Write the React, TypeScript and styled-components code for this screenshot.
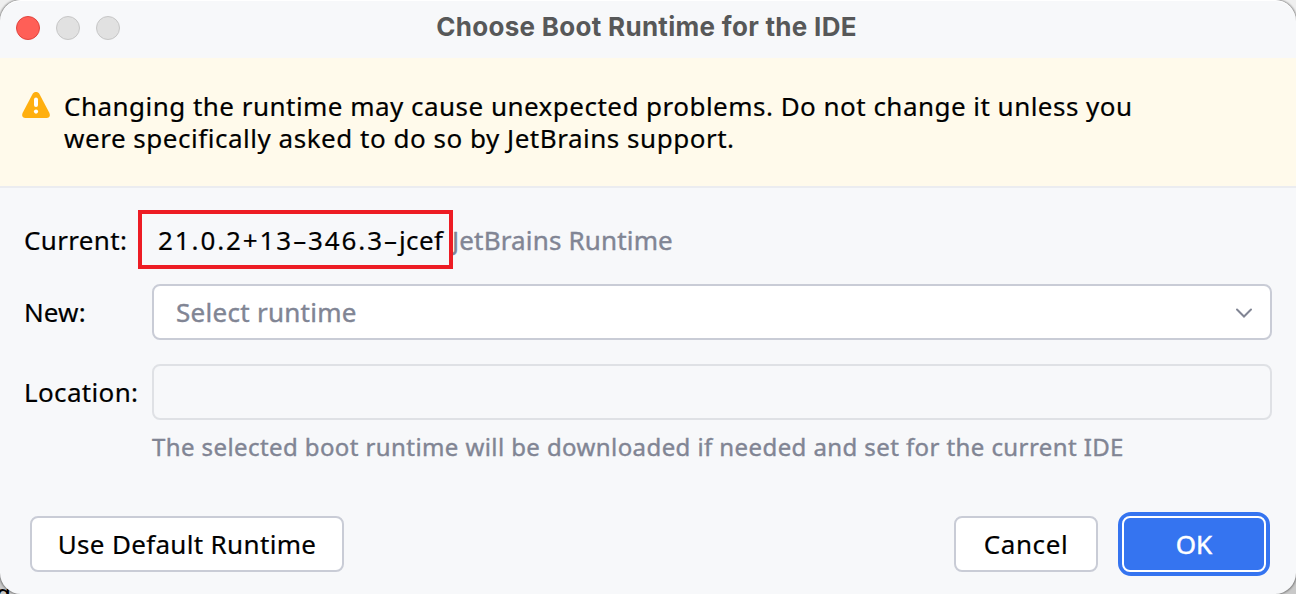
import React from "react";
import styled, { createGlobalStyle } from "styled-components";

const GlobalStyle = createGlobalStyle`
  *, *::before, *::after { box-sizing: border-box; }
  body { margin: 0; overflow: hidden; font-family: "Noto Sans", "Open Sans", sans-serif; }
  button { font: inherit; }
`;

const Desktop = styled.div`
  position: relative;
  width: 1296px;
  height: 594px;
  overflow: hidden;
  background: linear-gradient(#efefef 0%, #efefef 50%, #c9c9c9 50%, #c9c9c9 100%);
`;

const BackdropText = styled.span`
  position: absolute;
  left: -4px;
  top: 579px;
  font-size: 24px;
  font-weight: 500;
  line-height: 28px;
  color: #000;
`;

const Dialog = styled.div`
  position: relative;
  display: flex;
  flex-direction: column;
  height: 594px;
  border-radius: 21px;
  overflow: hidden;
  background: #f7f8fa;
  box-shadow: 0 0 2px 1px rgba(0, 0, 0, 0.4);
  color: #000;
  font-size: 26px;
  line-height: 32px;
`;

const TitleBar = styled.header`
  display: grid;
  grid-template-columns: 1fr auto 1fr;
  align-items: center;
  height: 58px;
  flex: none;
  padding: 0 16px;
  border-radius: 21px 21px 0 0;
  box-shadow: inset 0 1px 0 #fff;
`;

const Lights = styled.div`
  display: flex;
  gap: 16px;
  margin-top: -2px;
`;

const Light = styled.span<{ $active?: boolean }>`
  width: 24px;
  height: 24px;
  border-radius: 50%;
  background: ${(p) => (p.$active ? "#ff5f57" : "#e1e1e1")};
  border: 1px solid ${(p) => (p.$active ? "#e0443e" : "#c6c6c6")};
`;

const Title = styled.h1`
  margin: -4px 0 0;
  padding-right: 3px;
  font-family: Inter, sans-serif;
  font-size: 26px;
  font-weight: 700;
  line-height: 32px;
  letter-spacing: 0.3px;
  white-space: nowrap;
  color: #575859;
`;

const Label = styled.span<{ $spacing?: number }>`
  white-space: nowrap;
  letter-spacing: ${(p) => p.$spacing ?? 0}px;
  -webkit-text-stroke: 0.2px currentColor;
`;

const Muted = styled(Label)`
  color: #818594;
  -webkit-text-stroke: 0.4px currentColor;
`;

const Warning = styled.section`
  display: flex;
  gap: 14px;
  flex: none;
  height: 130px;
  padding: 32px 22px 0;
  background: #fffaeb;
  border-bottom: 2px solid #ebecf0;
`;

const WarningIcon = styled.svg`
  flex: none;
  width: 28px;
  height: 28px;
  margin-top: 1px;
`;

const WarningText = styled.p`
  display: flex;
  flex-direction: column;
  margin: 0;
`;

const Form = styled.main`
  display: flex;
  flex-direction: column;
  flex: none;
  padding: 22px 24px 0;
`;

const Row = styled.div<{ $gap?: number }>`
  display: flex;
  align-items: center;
  margin-bottom: ${(p) => p.$gap ?? 0}px;
`;

const RowLabel = styled.div`
  width: 128px;
  flex: none;
`;

const Highlight = styled.div`
  display: flex;
  align-items: center;
  position: relative;
  z-index: 1;
  width: 315px;
  height: 59px;
  margin-left: -14px;
  padding-left: 16px;
  border: 4px solid #ed1c24;
`;

const Vendor = styled(Muted)`
  margin-left: -1px;
`;

const Field = styled.div<{ $disabled?: boolean }>`
  display: flex;
  align-items: center;
  justify-content: space-between;
  flex: 1;
  height: 56px;
  padding: 0 16px 0 22px;
  border: 2px solid ${(p) => (p.$disabled ? "#dfe1e5" : "#c9ccd6")};
  border-radius: 8px;
  background: ${(p) => (p.$disabled ? "#f7f8fa" : "#fff")};
`;

const Hint = styled.div`
  padding: 11px 0 0 128px;
  font-size: 24px;
`;

const Footer = styled.footer`
  display: flex;
  align-items: center;
  justify-content: space-between;
  margin-top: auto;
  padding: 0 26px 18px 30px;
`;

const Actions = styled.div`
  display: flex;
  align-items: center;
  gap: 20px;
`;

const Button = styled.button<{ $width: number; $primary?: boolean }>`
  display: flex;
  align-items: center;
  justify-content: center;
  width: ${(p) => p.$width}px;
  height: ${(p) => (p.$primary ? 64 : 56)}px;
  padding: 0;
  color: ${(p) => (p.$primary ? "#fff" : "#000")};
  background: ${(p) => (p.$primary ? "#3574f0" : "#fff")};
  border: ${(p) => (p.$primary ? "4px solid #3574f0" : "2px solid #c9ccd6")};
  border-radius: ${(p) => (p.$primary ? 13 : 8)}px;
`;

const FocusInner = styled.span`
  display: flex;
  align-items: center;
  justify-content: center;
  width: 100%;
  height: 100%;
  border: 2px solid #fff;
  border-radius: 8px;
  -webkit-text-stroke: 0.5px currentColor;
`;

export default function App() {
  return (
    <>
      <GlobalStyle />
      <Desktop>
        <BackdropText>g</BackdropText>
        <Dialog>
          <TitleBar>
            <Lights>
              <Light $active />
              <Light />
              <Light />
            </Lights>
            <Title>Choose Boot Runtime for the IDE</Title>
            <span />
          </TitleBar>
          <Warning>
            <WarningIcon viewBox="0 0 28 28">
              <path
                d="M10.7 2.7C12 .4 16 .4 17.3 2.7L27.3 21.8C28.7 24.8 27.3 27 24.6 27H3.4C.7 27-.7 24.8.7 21.8Z"
                fill="#ffaf0f"
              />
              <rect x="12" y="6.5" width="4" height="9.5" rx="2" fill="#fff" />
              <circle cx="14" cy="20.6" r="2.1" fill="#fff" />
            </WarningIcon>
            <WarningText>
              <Label $spacing={0.475}>Changing the runtime may cause unexpected problems. Do not change it unless you</Label>
              <Label $spacing={0.52}>were specifically asked to do so by JetBrains support.</Label>
            </WarningText>
          </Warning>
          <Form>
            <Row $gap={15}>
              <RowLabel><Label $spacing={0.35}>Current:</Label></RowLabel>
              <Highlight>
                <Label $spacing={1.9}>21.0.2+13–346.3–<Label $spacing={0.4}>jcef</Label></Label>
              </Highlight>
              <Vendor $spacing={0.16}>JetBrains Runtime</Vendor>
            </Row>
            <Row $gap={24}>
              <RowLabel><Label $spacing={0.1}>New:</Label></RowLabel>
              <Field>
                <Muted $spacing={0.28}>Select runtime</Muted>
                <svg width="20" height="20" viewBox="0 0 20 20" fill="none">
                  <path d="M3 7.5L10 14.5L17 7.5" stroke="#818594" strokeWidth="2" strokeLinecap="round" />
                </svg>
              </Field>
            </Row>
            <Row>
              <RowLabel><Label $spacing={0.35}>Location:</Label></RowLabel>
              <Field $disabled />
            </Row>
            <Hint><Muted $spacing={0.41}>The selected boot runtime will be downloaded if needed and set for the current IDE</Muted></Hint>
          </Form>
          <Footer>
            <Button $width={314}><Label $spacing={0.33}>Use Default Runtime</Label></Button>
            <Actions>
              <Button $width={144}><Label $spacing={0.6}>Cancel</Label></Button>
              <Button $width={152} $primary><FocusInner>OK</FocusInner></Button>
            </Actions>
          </Footer>
        </Dialog>
      </Desktop>
    </>
  );
}
